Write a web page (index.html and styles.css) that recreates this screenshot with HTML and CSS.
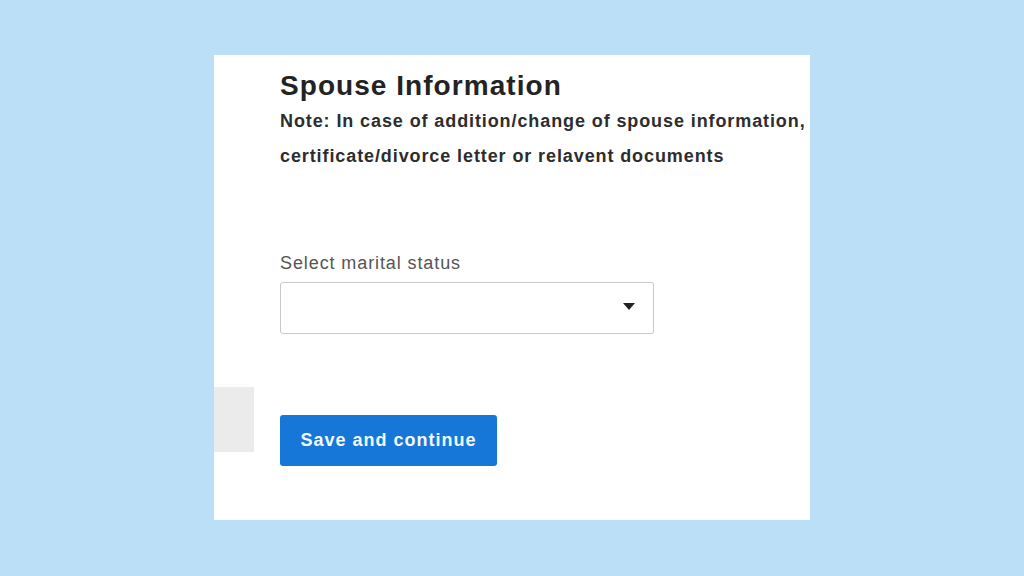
FILE: index.html
```html
<!DOCTYPE html>
<html>
<head>
<meta charset="utf-8">
<link rel="stylesheet" href="styles.css">
</head>
<body>
<div class="card">
  <div class="gutter"><div class="gutter-block"></div></div>
  <div class="content">
    <h1 class="title">Spouse Information</h1>
    <p class="note">Note: In case of addition/change of spouse information,</p>
    <p class="note">certificate/divorce letter or relavent documents</p>
    <label class="label">Select marital status</label>
    <div class="select"><span class="caret"></span></div>
    <button class="btn">Save and continue</button>
  </div>
</div>
</body>
</html>
```
FILE: styles.css
```css
html, body { margin: 0; padding: 0; }
body {
  background: #bcdff8;
  width: 1024px;
  height: 576px;
  overflow: hidden;
  font-family: "Liberation Sans", Arial, sans-serif;
}
.card {
  margin: 55px 0 0 214px;
  width: 596px;
  height: 465px;
  background: #fff;
  overflow: hidden;
  display: flex;
}
.gutter { width: 66px; flex: none; }
.gutter-block {
  margin-top: 332px;
  width: 40px;
  height: 65px;
  background: #ebebeb;
}
.content {
  flex: none;
  display: flex;
  flex-direction: column;
  align-items: flex-start;
  padding-top: 14px;
}
.title {
  margin: 0;
  font-size: 28px;
  line-height: 34px;
  font-weight: bold;
  letter-spacing: 1.05px;
  color: #232323;
  white-space: nowrap;
}
.note {
  margin: 0;
  font-size: 18px;
  line-height: 35px;
  font-weight: bold;
  letter-spacing: 0.9px;
  color: #2d2d2d;
  white-space: nowrap;
}
.note:first-of-type { margin-top: 1px; }
.label {
  margin-top: 78px;
  font-size: 18px;
  line-height: 22px;
  letter-spacing: 0.9px;
  color: #555;
}
.select {
  margin-top: 8px;
  box-sizing: border-box;
  width: 374px;
  height: 52px;
  border: 1px solid #c9c9c9;
  border-radius: 3px;
  display: flex;
  align-items: center;
  justify-content: flex-end;
  padding-right: 18px;
}
.caret {
  width: 0; height: 0;
  border-left: 6px solid transparent;
  border-right: 6px solid transparent;
  border-top: 7px solid #222;
  margin-top: -3px;
}
.btn {
  margin-top: 81px;
  width: 217px;
  height: 51px;
  border: none;
  border-radius: 3px;
  background: #1677d8;
  color: #f2f9ff;
  font-family: "Liberation Sans", Arial, sans-serif;
  font-size: 18px;
  font-weight: bold;
  letter-spacing: 1px;
  padding: 0;
}
```
